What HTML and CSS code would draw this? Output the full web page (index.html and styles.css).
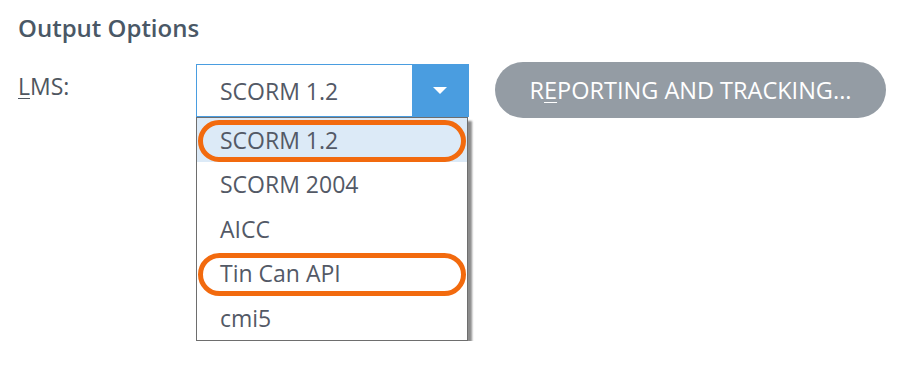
FILE: index.html
```html
<!DOCTYPE html>
<html>
<head>
<meta charset="utf-8">
<link rel="stylesheet" href="styles.css">
</head>
<body>
<div class="panel">
  <h2 class="title">Output Options</h2>
  <div class="row">
    <label class="label"><u>L</u>MS:</label>
    <div class="combo">
      <div class="select">
        <span class="value">SCORM 1.2</span>
        <span class="arrow"><svg width="14" height="8" viewBox="0 0 14 8"><path d="M0 0 H14 L7 7 Z" fill="#fff"/></svg></span>
      </div>
      <div class="menu">
        <div class="item selected"><span class="ring"></span>SCORM 1.2</div>
        <div class="item">SCORM 2004</div>
        <div class="item">AICC</div>
        <div class="item"><span class="ring"></span>Tin Can API</div>
        <div class="item">cmi5</div>
      </div>
    </div>
    <button class="btn">R<u>E</u>PORTING AND TRACKING...</button>
  </div>
</div>
</body>
</html>
```
FILE: styles.css
```css
html, body {
  margin: 0;
  padding: 0;
  background: #ffffff;
}
body {
  font-family: "Open Sans", "Noto Sans", sans-serif;
  color: #4f5660;
}
.panel {
  padding: 12px 0 0 18px;
}
.title {
  margin: 0;
  font-size: 24px;
  font-weight: 600;
  color: #4a5866;
  line-height: 32px;
}
.row {
  display: flex;
  align-items: flex-start;
  margin-top: 20px;
}
.label {
  width: 178px;
  font-size: 23px;
  line-height: 32px;
  margin-top: 6px;
  color: #4f5660;
}
.label u, .btn u {
  text-decoration-thickness: 1px;
  text-underline-offset: 3px;
}
.combo {
  display: flex;
  flex-direction: column;
  width: 273px;
}
.select {
  display: flex;
  height: 53px;
  box-sizing: border-box;
  border: 1px solid #4a9de0;
  background: #fff;
}
.value {
  flex: 1;
  padding-left: 23px;
  padding-top: 2px;
  font-size: 23px;
  line-height: 49px;
  color: #535966;
}
.arrow {
  width: 56px;
  background: #4a9de0;
  display: flex;
  align-items: center;
  justify-content: center;
}
.menu {
  width: 272px;
  box-sizing: border-box;
  background: #fff;
  border: 1px solid #6e6e6e;
  box-shadow: 4px 4px 2px rgba(0, 0, 0, 0.45);
}
.item {
  position: relative;
  height: 44.4px;
  line-height: 44px;
  padding-left: 23px;
  font-size: 23px;
  color: #535966;
}
.item.selected {
  background: #dceaf7;
}
.ring {
  position: absolute;
  left: 1px;
  right: 1px;
  top: 2px;
  bottom: 0;
  border: 5px solid #f26a0e;
  border-radius: 22px;
}
.btn {
  margin-left: 26px;
  margin-top: -2px;
  width: 391px;
  height: 56px;
  border: none;
  border-radius: 28px;
  background: #949ca4;
  color: #ffffff;
  font-family: "Open Sans", "Noto Sans", sans-serif;
  font-size: 23.5px;
  padding: 0;
}
```
